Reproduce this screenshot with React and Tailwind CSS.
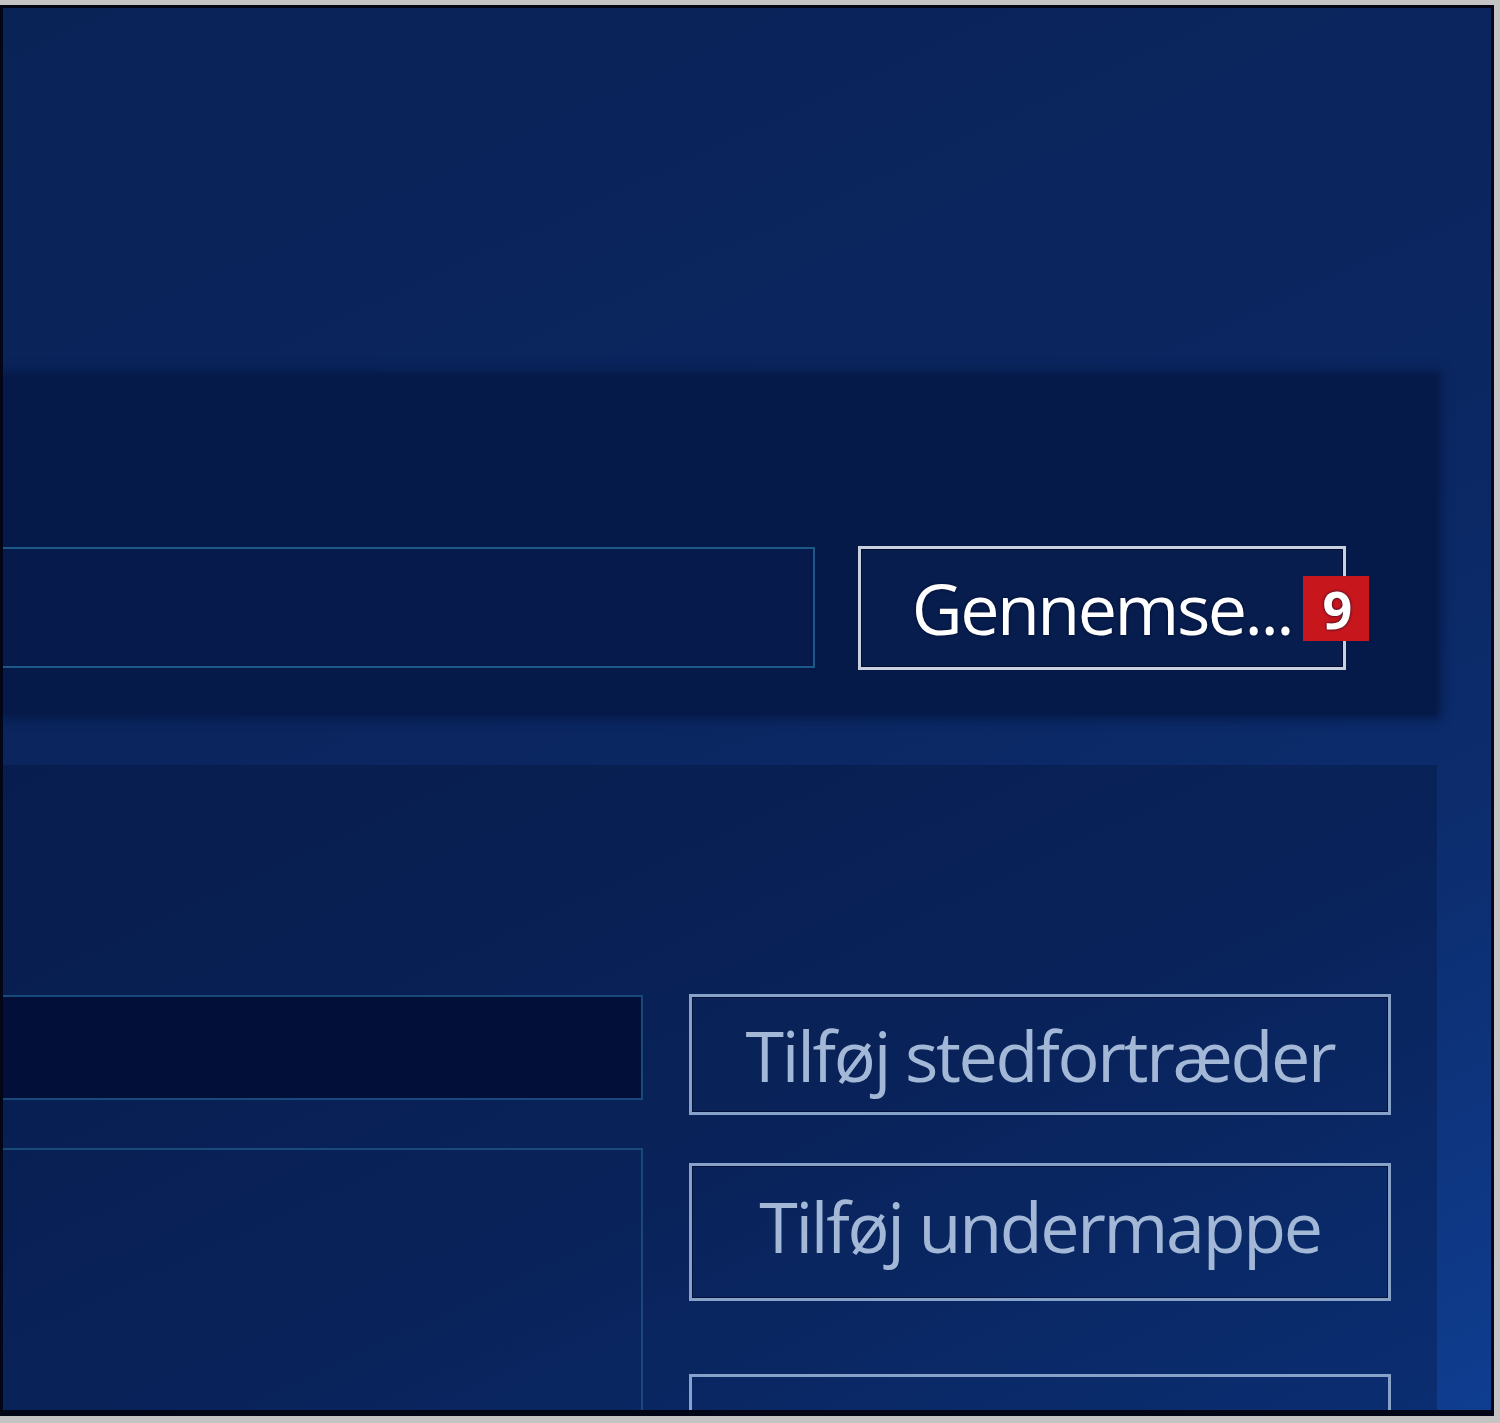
import React from 'react';

const font = { fontFamily: '"Open Sans", "Noto Sans", sans-serif' };

function Badge({ n }) {
  return (
    <span
      className="absolute right-[-26px] top-[27px] w-[66px] h-[65px] bg-[#c8161d] text-white font-bold text-[52px] leading-none flex items-center justify-center"
      style={font}
    >
      {n}
    </span>
  );
}

export default function App() {
  return (
    <div className="w-[1500px] h-[1423px] bg-[#c4c4c4] pt-[5px] pr-[6px] pb-[7px] overflow-hidden" style={font}>
      <div className="w-[1494px] h-[1411px] border-t-[3px] border-l-[3px] border-r-[3px] border-b-[6px] border-[#020617]">
        <div className="w-full h-full overflow-hidden flex flex-col pt-[367px] bg-[linear-gradient(155deg,#0a2357_0%,#0b2660_45%,#0c2c6c_70%,#0f3d90_100%)]">
          {/* path panel */}
          <div className="h-[340px] mr-[54px] shrink-0 bg-[#051a48] shadow-[0_0_10px_4px_#051a48] flex items-start pt-[171px]">
            <div className="w-[812px] h-[121px] mt-[1px] border-2 border-l-0 border-[#1d5887] bg-[#061b4b]" />
            <button className="relative ml-[43px] w-[488px] h-[124px] border-[3px] border-[#c9d1de] outline outline-1 outline-[#000c30] -outline-offset-[4px] bg-[#071d4e] text-white text-[70px] tracking-[-2.5px] leading-none flex items-center justify-center [text-shadow:0_0_3px_#000a2a]">
              Gennemse...
              <Badge n="9" />
            </button>
          </div>

          {/* folders panel */}
          <div className="flex-1 mt-[50px] mr-[54px] bg-[rgba(3,14,48,0.3)] flex pt-[229px]">
            <div className="w-[640px] flex flex-col">
              <div className="h-[105px] mt-[1px] border-y-2 border-r-2 border-[#17497a] bg-[#020f38]" />
              <div className="flex-1 mt-[48px] border-t-2 border-r-2 border-[#17497a]" />
            </div>
            <div className="ml-[46px] w-[702px] flex flex-col">
              <button className="h-[121px] border-[3px] border-[#87a2c8] outline outline-1 outline-[#02103a] -outline-offset-[4px] text-[#a3b8d6] text-[70px] tracking-[-2.3px] leading-none flex items-center justify-center">
                Tilføj stedfortræder
              </button>
              <button className="h-[138px] mt-[48px] border-[3px] border-[#87a2c8] outline outline-1 outline-[#02103a] -outline-offset-[4px] text-[#a3b8d6] text-[70px] tracking-[-2.3px] leading-none flex items-center justify-center pb-[12px]">
                Tilføj undermappe
              </button>
              <div className="h-[138px] mt-[73px] shrink-0 border-[3px] border-[#87a2c8]" />
            </div>
          </div>
        </div>
      </div>
    </div>
  );
}
